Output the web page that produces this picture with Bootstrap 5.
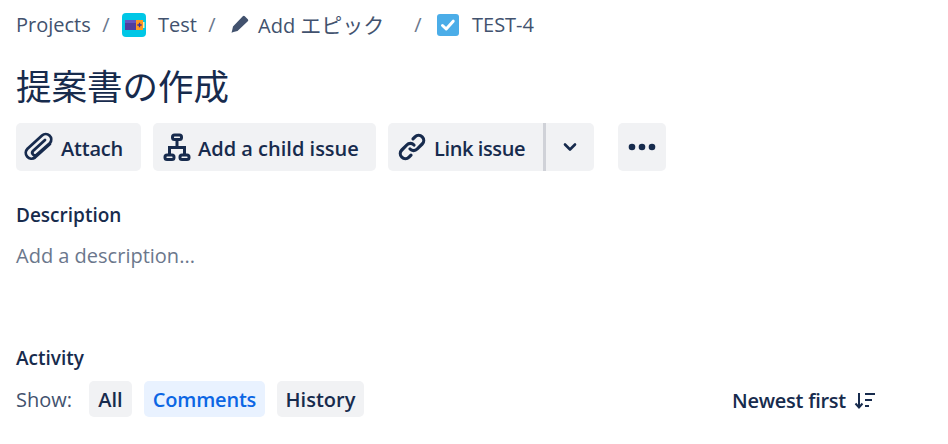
<!DOCTYPE html>
<html lang="ja">

<head>
    <meta charset="UTF-8">
    <meta name="viewport" content="width=device-width, initial-scale=1.0">
    <title>TEST-4</title>
    <link href="https://cdn.jsdelivr.net/npm/bootstrap@5.3.3/dist/css/bootstrap.min.css" rel="stylesheet" />
    <style>
        body {
            font-family: "Open Sans", "Noto Sans CJK JP", sans-serif;
            font-size: 20px;
            color: #172b4d;
            background: #fff;
            overflow: hidden;
        }

        .page-wrap {
            padding: 0 16px;
            height: 444px;
        }

        /* パンくず */
        .crumbs {
            height: 24px;
            margin-top: 13px;
            color: #42526e;
            font-size: 20px;
            line-height: 24px;
            white-space: nowrap;
        }

        .crumb-sep {
            color: #6b778c;
            width: 34px;
            text-align: center;
            flex: none;
        }

        .crumb-projects { width: 74px; }
        .crumb-projects + .crumb-sep { width: 32px; }
        .crumb-test { width: 37px; margin-left: 12px; }
        .crumb-epic { width: 143px; margin-left: 9px; }
        .crumb-epic-ja { font-size: 21px; }
        .crumb-key { margin-left: 13px; }
        .crumb-pen { margin-left: 2px; margin-bottom: 3px; }
        .crumb-check { margin-left: 2px; }

        .crumb-icon {
            flex: none;
            display: block;
        }

        .issue-title {
            font-size: 35.5px;
            font-weight: 400;
            line-height: 48px;
            margin: 25px 0 13px;
            color: #172b4d;
        }

        /* ボタン */
        .tool-btn {
            height: 48px;
            background: #f1f2f4;
            border: 0;
            border-radius: 5px;
            color: #172b4d;
            font-size: 20px;
            font-weight: 600;
            padding: 0;
        }

        .tool-btn:hover {
            background: #e6e8ec;
        }

        .tool-label {
            padding-top: 3px;
        }

        .btn-attach { width: 125px; margin-right: 12px; }
        .btn-attach svg { margin-left: 8px; }
        .btn-attach .tool-label { margin-left: 7px; letter-spacing: -0.2px; }
        .btn-child { width: 223px; margin-right: 12px; }
        .btn-child svg { margin-left: 10px; }
        .btn-child .tool-label { margin-left: 7px; }
        .link-group { margin-right: 24px; }
        .btn-link-issue { width: 155px; }
        .btn-link-issue svg { margin-left: 10px; }
        .btn-link-issue .tool-label { margin-left: 8px; letter-spacing: -0.4px; }
        .btn-caret { width: 48px; }
        .btn-more { width: 48px; }

        .split-line {
            width: 3px;
            height: 48px;
            background: #d0d2d8;
        }

        .section-label {
            font-size: 19px;
            font-weight: 600;
            line-height: 26px;
            color: #172b4d;
        }

        .label-desc { margin-top: 31px; }
        .label-activity { margin-top: 75px; }

        .desc-hint {
            font-size: 20px;
            line-height: 28px;
            color: #6b778c;
            margin-top: 14px;
        }

        .activity-row {
            margin-top: 10px;
            margin-right: -16px;
        }

        .pill-btn {
            height: 36px;
            background: #f1f2f4;
            border: 0;
            border-radius: 5px;
            color: #172b4d;
            font-size: 20px;
            font-weight: 600;
            padding: 2px 0 0;
            line-height: 34px;
        }

        .pill-all { width: 43px; margin-right: 12px; }
        .pill-history { width: 87px; }

        .pill-comments {
            width: 121px;
            margin-right: 12px;
            background: #e9f2ff;
            color: #0c66e4;
            letter-spacing: -0.2px;
        }

        .show-label {
            color: #42526e;
            font-size: 20px;
            width: 73px;
            padding-top: 2px;
        }

        .sort-btn {
            font-size: 20px;
            font-weight: 600;
            color: #172b4d;
            margin-left: auto;
            margin-right: 72px;
            padding-top: 3px;
            letter-spacing: -0.25px;
        }
    </style>
</head>

<body>
    <div class="page-wrap">
        <!-- パンくず -->
        <nav class="crumbs d-flex align-items-center">
            <span class="crumb-projects">Projects</span>
            <span class="crumb-sep">/</span>
            <svg class="crumb-icon" width="24" height="24" viewBox="0 0 24 24">
                <rect width="24" height="24" rx="4" fill="#00c7e6" />
                <rect x="3" y="7" width="11" height="10" fill="#4f3d9e" />
                <rect x="3" y="7" width="11" height="3" fill="#6554c0" />
                <rect x="14" y="7" width="7" height="10" fill="#ff991f" />
                <rect x="21" y="9" width="1.5" height="6" fill="#ffe9b0" />
                <path d="M17.500 9.800v4.400M15.300 12h4.400" stroke="#403294" stroke-width="1.300" />
            </svg>
            <span class="crumb-test">Test</span>
            <span class="crumb-sep">/</span>
            <svg class="crumb-icon crumb-pen" width="18" height="18" viewBox="0 0 18 18">
                <path d="M11.800 1.200a1.400 1.400 0 0 1 2 0l3 3a1.400 1.400 0 0 1 0 2L6.500 16 2.500 17 .5 17.800 1 16l1-4.500z" fill="#42526e" />
            </svg>
            <span class="crumb-epic">Add <span class="crumb-epic-ja">エピック</span></span>
            <span class="crumb-sep">/</span>
            <svg class="crumb-icon crumb-check" width="22" height="22" viewBox="0 0 22 22">
                <rect width="22" height="22" rx="3" fill="#4bade8" />
                <path d="M5.500 11.500l3.700 3.500 7-7.800" fill="none" stroke="#fff" stroke-width="3" stroke-linecap="round" stroke-linejoin="round" />
            </svg>
            <span class="crumb-key">TEST-4</span>
        </nav>

        <h1 class="issue-title">提案書の作成</h1>

        <!-- アクション -->
        <div class="d-flex">
            <button class="tool-btn btn-attach d-flex align-items-center">
                <svg width="30" height="30" viewBox="0 0 30 30" fill="none" stroke="#172b4d" stroke-width="2.800" stroke-linecap="round">
                    <path d="M26 12 11 25.500a5.800 5.800 0 0 1-7.500-8.800L18 3.500a5.500 5.500 0 0 1 8 7.500L13 22.500a2.300 2.300 0 0 1-4-3.500L21 8" />
                </svg>
                <span class="tool-label">Attach</span>
            </button>
            <button class="tool-btn btn-child d-flex align-items-center">
                <svg width="28" height="28" viewBox="0 0 28 28" fill="none" stroke="#172b4d" stroke-width="3">
                    <rect x="9.500" y="2" width="9" height="4.500" rx="2" />
                    <rect x="2" y="22" width="9" height="4.500" rx="2" />
                    <rect x="17" y="22" width="9" height="4.500" rx="2" />
                    <path d="M14 6.500v8M6.500 22v-7.500h15v7.500" />
                </svg>
                <span class="tool-label">Add a child issue</span>
            </button>
            <div class="link-group d-flex">
                <button class="tool-btn btn-link-issue d-flex align-items-center rounded-end-0">
                    <svg width="28" height="28" viewBox="0 0 28 28" fill="none" stroke="#172b4d" stroke-width="3.200" stroke-linecap="round">
                        <path d="M12 16a5 5 0 0 0 7.200 0l5-5a5 5 0 0 0-7.200-7.200l-2 2" />
                        <path d="M16 12a5 5 0 0 0-7.200 0l-5 5a5 5 0 0 0 7.200 7.200l2-2" />
                    </svg>
                    <span class="tool-label">Link issue</span>
                </button>
                <div class="split-line"></div>
                <button class="tool-btn btn-caret d-flex align-items-center justify-content-center rounded-start-0">
                    <svg width="14" height="10" viewBox="0 0 14 10" fill="none" stroke="#172b4d" stroke-width="2.600" stroke-linecap="round" stroke-linejoin="round">
                        <path d="M2 2.500l5 5 5-5" />
                    </svg>
                </button>
            </div>
            <button class="tool-btn btn-more d-flex align-items-center justify-content-center">
                <svg width="28" height="8" viewBox="0 0 28 8" fill="#172b4d">
                    <circle cx="4" cy="4" r="3.300" />
                    <circle cx="14" cy="4" r="3.300" />
                    <circle cx="24" cy="4" r="3.300" />
                </svg>
            </button>
        </div>

        <div class="section-label label-desc">Description</div>
        <div class="desc-hint">Add a description...</div>

        <div class="section-label label-activity">Activity</div>
        <!-- コメント切替 -->
        <div class="activity-row d-flex align-items-center">
            <span class="show-label">Show:</span>
            <button class="pill-btn pill-all">All</button>
            <button class="pill-btn pill-comments">Comments</button>
            <button class="pill-btn pill-history">History</button>
            <div class="sort-btn d-flex align-items-center">
                <span>Newest first</span>
                <svg class="ms-2" width="22" height="20" viewBox="0 0 22 20" fill="none" stroke="#172b4d" stroke-width="2">
                    <path d="M5 2v14M1.500 12.500 5 16.500l3.500-4M11 3h10M11 9h7M11 15h4" />
                </svg>
            </div>
        </div>
    </div>

    <script src="https://cdn.jsdelivr.net/npm/bootstrap@5.3.3/dist/js/bootstrap.bundle.min.js"></script>
</body>

</html>
